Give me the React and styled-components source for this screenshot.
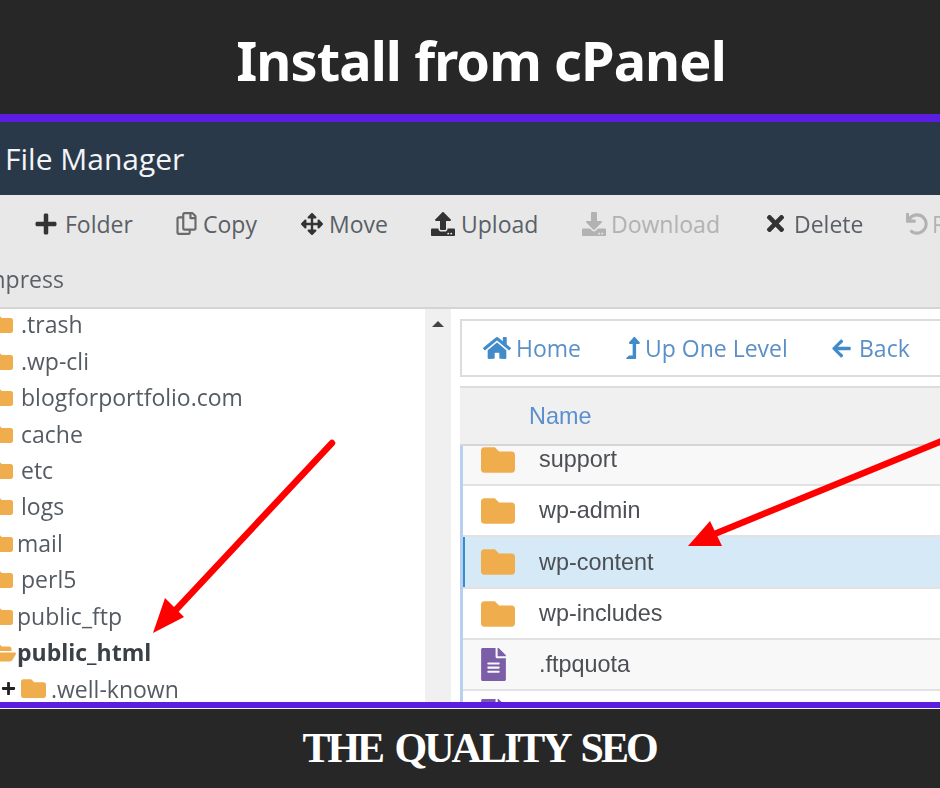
import React from 'react';
import styled, { createGlobalStyle } from 'styled-components';
import {
  FaPlus, FaRegCopy, FaArrowsAlt, FaUpload, FaDownload, FaTimes, FaUndo,
  FaHome, FaLevelUpAlt, FaArrowLeft, FaFolder, FaFolderOpen, FaFileAlt,
} from 'react-icons/fa';

const Global = createGlobalStyle`
  html, body { margin: 0; padding: 0; background: #272727; }
`;

const Page = styled.div`
  width: 940px;
  height: 788px;
  overflow: hidden;
  display: flex;
  flex-direction: column;
  background: #272727;
`;

const Banner = styled.header`
  height: 114px;
  display: flex;
  align-items: center;
  justify-content: center;
  color: #fff;
  font: 700 54px/1 "Noto Sans", sans-serif;
  letter-spacing: -0.9px;
  padding: 5px 0 0 22px;
  box-sizing: border-box;
`;

const PurpleBar = styled.div`
  height: ${p => p.$h}px;
  flex: none;
  background: #5b1de0;
`;

const Shot = styled.main`
  position: relative;
  height: 580px;
  flex: none;
  overflow: hidden;
  background: #fff;
`;

const Blurred = styled.div`
  filter: blur(0.45px);
`;

const AppBar = styled.div`
  height: 73px;
  background: #29394a;
  color: #f2f4f6;
  display: flex;
  align-items: center;
  padding-left: 5px;
  font: 400 30px "Open Sans", sans-serif;
`;

const Toolbar = styled.div`
  height: 114px;
  box-sizing: border-box;
  background: #e8e8e8;
  border-bottom: 2px solid #d4d4d4;
  font: 400 23px "Open Sans", sans-serif;
  color: #5b5f66;
`;

const ToolRow = styled.div`
  height: 57px;
  display: flex;
  align-items: center;
  padding-left: 34px;
  white-space: nowrap;
`;

const ToolButton = styled.div`
  flex: none;
  width: ${p => p.$w}px;
  display: flex;
  align-items: center;
  gap: ${p => p.$gap || 6}px;
  color: ${p => (p.$off ? '#b2b2b2' : 'inherit')};
  svg { flex: none; color: ${p => (p.$off ? '#b2b2b2' : p.$light ? '#6a6a6a' : '#333')}; }
`;

const CompressRow = styled.div`
  height: 54px;
  display: flex;
  align-items: center;
  margin-left: -44px;
`;

const Body = styled.div`
  display: flex;
  height: 393px;
`;

const Tree = styled.div`
  width: 425px;
  flex: none;
  margin-top: -3px;
  font: 400 23px "Open Sans", sans-serif;
  color: #555b63;
  overflow: hidden;
`;

const TreeRow = styled.div`
  height: 36.45px;
  display: flex;
  align-items: center;
  gap: ${p => p.$gap}px;
  margin-left: ${p => p.$left || -11}px;
  font-weight: ${p => (p.$bold ? 700 : 400)};
  color: ${p => (p.$bold ? '#3a4048' : 'inherit')};
  white-space: nowrap;
  svg { flex: none; color: #f0ad4e; }
`;

const Expander = styled(FaPlus)`
  && { color: #222; }
`;

const Scrollbar = styled.div`
  width: 26px;
  flex: none;
  background: #f0f0f0;
  display: flex;
  justify-content: center;
  padding-top: 12px;
  box-sizing: border-box;
`;

const ScrollArrow = styled.div`
  width: 0;
  height: 0;
  border-left: 6px solid transparent;
  border-right: 6px solid transparent;
  border-bottom: 6px solid #444;
`;

const Pane = styled.div`
  flex: 1;
  min-width: 0;
  padding: 10px 0 0 9px;
`;

const NavBox = styled.div`
  height: 58px;
  box-sizing: border-box;
  border: 2px solid #dcdcdc;
  border-right: 0;
  display: flex;
  align-items: center;
  padding-left: 21px;
  font: 400 23px "Open Sans", sans-serif;
  color: #5b8fc7;
  white-space: nowrap;
`;

const NavLink = styled.div`
  flex: none;
  display: flex;
  align-items: center;
  width: ${p => p.$w}px;
  gap: ${p => p.$gap}px;
  svg { flex: none; color: #428bca; }
`;

const TableBox = styled.div`
  margin-top: 9px;
  border-top: 2px solid #dcdcdc;
  font: 400 23.4px "Liberation Sans", sans-serif;
  color: #4c4f54;
`;

const HeadRow = styled.div`
  height: 56px;
  background: #f0f0f0;
  border-bottom: 2px solid #d6d6d6;
  color: #5b8fcf;
  display: flex;
  align-items: center;
  padding-left: 69px;
`;

const FileList = styled.div`
  border-left: 3px solid #b9cff0;
  overflow: hidden;
`;

const FileRow = styled.div`
  height: ${p => p.$h}px;
  box-sizing: border-box;
  display: flex;
  align-items: center;
  padding-left: 18px;
  margin-top: ${p => p.$pull || 0}px;
  background: ${p => (p.$selected ? '#d5e9f7' : p.$alt ? '#f8f8f8' : '#fff')};
  border-bottom: 2px solid #e2e2e2;
  ${p => p.$selected && 'box-shadow: inset 2px 0 0 #2f8fd0;'}
  svg { flex: none; }
`;

const IconCell = styled.div`
  width: 58px;
  flex: none;
  display: flex;
  align-items: center;
  color: ${p => p.$color};
`;

const FileIcon = styled(FaFileAlt)`
  margin-left: -4px;
`;

const Footer = styled.footer`
  flex: 1;
  border-top: 1px solid #f1f1f1;
  display: flex;
  align-items: center;
  justify-content: center;
  color: #fff;
  font: 700 42px/1 "Liberation Serif", serif;
  letter-spacing: -3px;
  word-spacing: 5px;
  padding: 0 0 1px 18px;
`;

const Arrows = styled.svg`
  position: absolute;
  left: 0;
  top: -122px;
  pointer-events: none;
`;

const treeRows = [
  { name: '.trash', gap: 8 },
  { name: '.wp-cli', gap: 8 },
  { name: 'blogforportfolio.com', gap: 8 },
  { name: 'cache', gap: 8 },
  { name: 'etc', gap: 8 },
  { name: 'logs', gap: 8 },
  { name: 'mail', gap: 4 },
  { name: 'perl5', gap: 8 },
  { name: 'public_ftp', gap: 4 },
];

const fileRows = [
  { name: 'support', h: 51, alt: true, pull: -11 },
  { name: 'wp-admin', h: 51 },
  { name: 'wp-content', h: 52, selected: true },
  { name: 'wp-includes', h: 51 },
  { name: '.ftpquota', h: 51, alt: true, file: true },
  { name: '', h: 51, file: true },
];

export default function App() {
  return (
    <Page>
      <Global />
      <Banner>Install from cPanel</Banner>
      <PurpleBar $h={8} />
      <Shot>
        <Blurred>
          <AppBar>File Manager</AppBar>
          <Toolbar>
            <ToolRow>
              <ToolButton $w={141} $gap={7}><FaPlus size={24} />Folder</ToolButton>
              <ToolButton $w={126} $gap={5} $light><FaRegCopy size={23} />Copy</ToolButton>
              <ToolButton $w={130} $gap={6}><FaArrowsAlt size={22} />Move</ToolButton>
              <ToolButton $w={151} $gap={6}><FaUpload size={24} />Upload</ToolButton>
              <ToolButton $w={181} $gap={5} $off><FaDownload size={24} />Download</ToolButton>
              <ToolButton $w={143} $gap={6}><FaTimes size={25} />Delete</ToolButton>
              <ToolButton $w={80} $gap={4} $off><FaUndo size={22} />Reset</ToolButton>
            </ToolRow>
            <CompressRow>Compress</CompressRow>
          </Toolbar>
          <Body>
            <Tree>
              {treeRows.map(r => (
                <TreeRow key={r.name} $gap={r.gap}><FaFolder size={24} />{r.name}</TreeRow>
              ))}
              <TreeRow $gap={1} $bold><FaFolderOpen size={27} />public_html</TreeRow>
              <TreeRow $gap={5} $left={1}>
                <Expander size={15} />
                <FaFolder size={25} />
                .well-known
              </TreeRow>
            </Tree>
            <Scrollbar><ScrollArrow /></Scrollbar>
            <Pane>
              <NavBox>
                <NavLink $w={139} $gap={5}><FaHome size={28} />Home</NavLink>
                <NavLink $w={209} $gap={1}><FaLevelUpAlt size={22} />Up One Level</NavLink>
                <NavLink $w={90} $gap={7}><FaArrowLeft size={21} />Back</NavLink>
              </NavBox>
              <TableBox>
                <HeadRow>Name</HeadRow>
                <FileList>
                  {fileRows.map((f, i) => (
                    <FileRow key={i} $h={f.h} $alt={f.alt} $selected={f.selected} $pull={f.pull}>
                      {f.file ? (
                        <IconCell $color="#7b5ea7"><FileIcon size={33} /></IconCell>
                      ) : (
                        <IconCell $color="#f0ad4e"><FaFolder size={34} /></IconCell>
                      )}
                      {f.name}
                    </FileRow>
                  ))}
                </FileList>
              </TableBox>
            </Pane>
          </Body>
        </Blurred>
        <Arrows width="940" height="788" viewBox="0 0 940 788">
          <g fill="#fe0000">
            <line x1="332" y1="443" x2="172" y2="614" stroke="#fe0000" strokeWidth="6.5" strokeLinecap="round" />
            <polygon points="153,633 165,598 184,617" />
            <line x1="942" y1="441" x2="712" y2="535" stroke="#fe0000" strokeWidth="6.5" />
            <polygon points="688,546 710,521 722,546" />
          </g>
        </Arrows>
      </Shot>
      <PurpleBar $h={6} />
      <Footer>THE QUALITY SEO</Footer>
    </Page>
  );
}
